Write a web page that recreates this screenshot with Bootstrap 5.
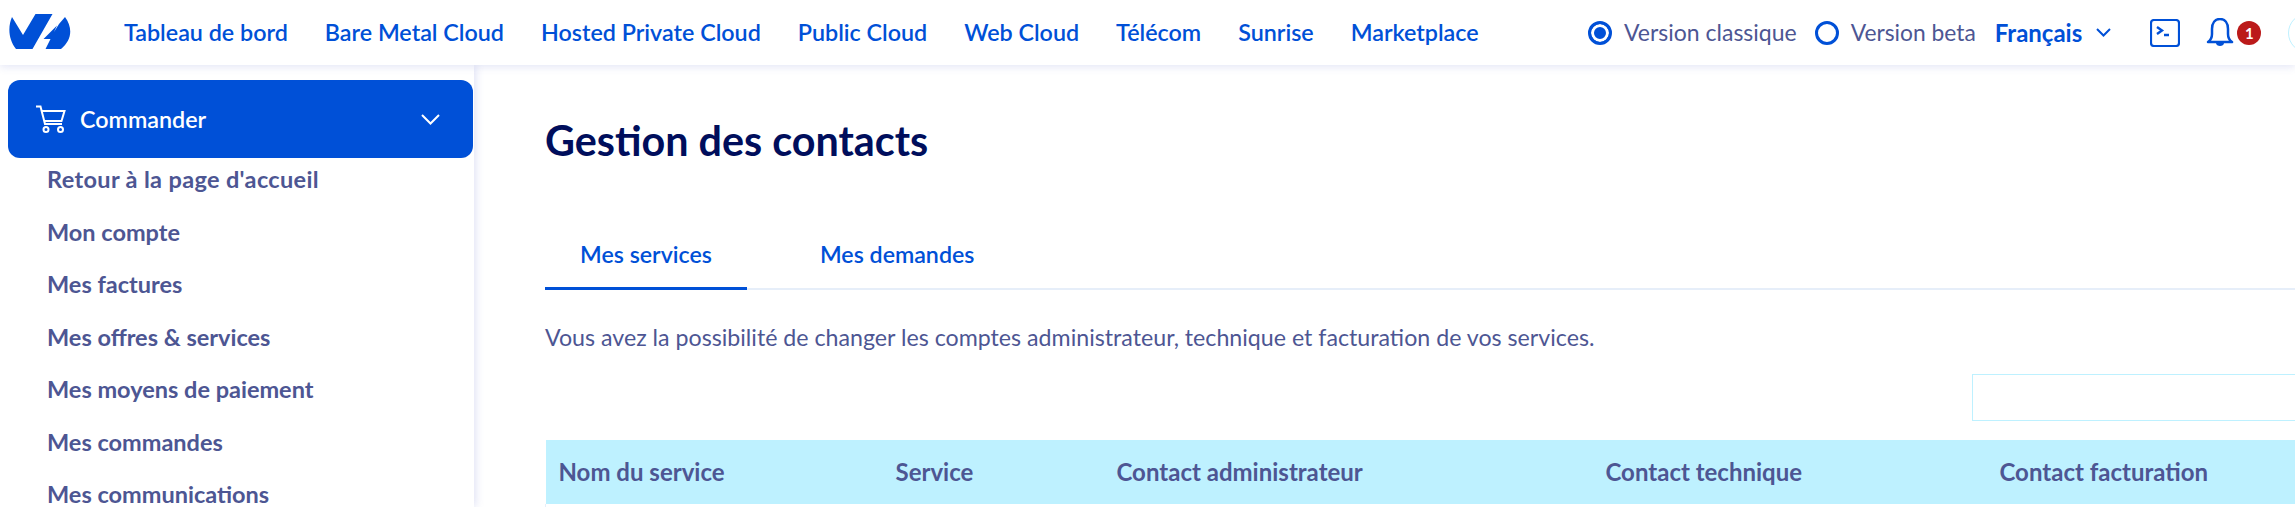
<!doctype html>
<html lang="fr"><head><meta charset="utf-8"><title>Gestion des contacts</title>
<link href="https://cdn.jsdelivr.net/npm/bootstrap@5.3.0/dist/css/bootstrap.min.css" rel="stylesheet">
<style>
html,body{height:507px;overflow:hidden}
body{font-family:"Lato","Liberation Sans",sans-serif;color:#4d5693;background:#fff}
.topbar{height:65px;padding:0;background:#fff;box-shadow:0 2px 8px rgba(90,100,200,.16);position:relative;z-index:2}
.brand-logo{width:116px;flex:none;padding:0}
.logo-svg{margin-left:1px}
.top-nav{gap:37px}
.top-nav .nav-link{padding:0;color:#0050d7;font-size:23.3px;font-weight:600;white-space:nowrap}
.top-right{position:absolute;left:1588px;top:0;width:707px;overflow:hidden;height:65px}
.top-right>*{flex:none}
.ver-radio{width:24px;height:24px;margin:0 12px 0 0;border:3px solid #0050d7;background:#fff;box-shadow:none}
.ver-radio:checked{background:#0050d7;border-color:#0050d7;background-image:none;box-shadow:inset 0 0 0 3px #fff}
.ver-label{font-size:23px;white-space:nowrap;color:#4d5693}
.gap-a{margin-right:18px}.gap-b{margin-right:19px}
.beta{font-size:22.8px}
.lang{font-size:24px;font-weight:700;color:#0050d7;white-space:nowrap}
.chev{margin-left:14px}
.term{margin-left:39px}
.bell{margin-left:26px}
.alert-count{width:24px;height:24px;padding:0;line-height:24px;font-size:15px;background:#bb1a1a;border-radius:50%;color:#fff;font-weight:700;text-align:center;margin-left:3px}
.avatar{width:40px;height:40px;border:1px solid #bef1ff;border-radius:50%;margin-left:27px}
.shell{height:442px}
.side{width:474px;flex:none;padding:15px 1px 0 8px;box-shadow:2px 0 8px rgba(90,100,200,.18);background:#fff;overflow:hidden}
.order-btn{height:78px;width:465px;background:#0050d7;color:#fff;border:0;border-radius:12px;padding:0 33px 0 27px;font-size:23.3px;font-weight:600;text-align:left}
.order-btn:hover{background:#0050d7;color:#fff}
.cart{flex:none;margin-right:14px}
.side-list{padding-left:39px;margin-top:-5px}
.side-list .nav-link{padding:0;height:52.5px;line-height:52.5px;color:#4d5693;font-size:23.5px;font-weight:700;white-space:nowrap}
.side-list .home-link{letter-spacing:.35px}
.work{flex:1;min-width:0;padding:0 0 0 71px;overflow:hidden}
.page-title{font-size:41.3px;font-weight:700;color:#000e5c;margin:50px 0 0;line-height:50px}
.tabs-row{margin-top:63px;border-bottom:2px solid #e6eef9;height:62px}
.tabs-row .nav-link{border:0;border-radius:0;padding:0;height:62px;line-height:53px;margin:0;font-size:23.2px;font-weight:600;color:#0050d7;background:none;text-align:center}
.tabs-row .nav-link.active{color:#0050d7;border-bottom:3px solid #0050d7;width:202px;background:none}
.tabs-row .second{margin-left:73px}
.intro{font-size:23.2px;margin:31px 0 0;line-height:32px;color:#4d5693;white-space:nowrap}
.filter-row{margin-top:21px;height:47px}
.filter-box{margin-left:auto;width:323px;height:47px;border:1px solid #bef1ff;border-right:0;border-radius:0;box-shadow:none;flex:none}
.svc-table{table-layout:fixed;width:1750px;margin:19px 0 0}
.svc-table th{background:#bef1ff;color:#4d5693;height:64px;padding:0 13px;vertical-align:middle;font-size:24px;font-weight:700;border:0;white-space:nowrap;box-shadow:none}
.svc-table td{border:0;border-left:1px solid #e6eef9;height:40px;padding:0}
.c1{width:337px}.c2{width:221px}.c3{width:489px}.c4{width:394px}.c5{width:309px}
</style></head><body>
<nav class="navbar topbar d-flex flex-nowrap justify-content-start align-items-center">
  <a class="navbar-brand brand-logo m-0 ms-2" href="#" aria-label="OVHcloud">
    <svg width="62" height="37" viewBox="0 0 62 37" class="d-block logo-svg"><path fill="#0050d7" d="M3 3 L14 21 L26.500 0 L43.500 0 L23.500 35 L7 35 C-1 25 -1 12 3 3Z M56 3 C64 14 63 26 52 35 L36.500 35 L41.500 25 L34.500 25 L48 11.500 L45 18 L50 10Z"/></svg>
  </a>
  <ul class="nav top-nav flex-nowrap">
    <li class="nav-item"><a class="nav-link" href="#">Tableau de bord</a></li>
    <li class="nav-item"><a class="nav-link" href="#">Bare Metal Cloud</a></li>
    <li class="nav-item"><a class="nav-link" href="#">Hosted Private Cloud</a></li>
    <li class="nav-item"><a class="nav-link" href="#">Public Cloud</a></li>
    <li class="nav-item"><a class="nav-link" href="#">Web Cloud</a></li>
    <li class="nav-item"><a class="nav-link" href="#">Télécom</a></li>
    <li class="nav-item"><a class="nav-link" href="#">Sunrise</a></li>
    <li class="nav-item"><a class="nav-link" href="#">Marketplace</a></li>
  </ul>
  <div class="top-right d-flex align-items-center">
    <input class="form-check-input ver-radio mt-0" type="radio" name="ver" checked aria-label="Version classique">
    <span class="ver-label gap-a">Version classique</span>
    <input class="form-check-input ver-radio mt-0" type="radio" name="ver" aria-label="Version beta">
    <span class="ver-label beta gap-b">Version beta</span>
    <span class="lang">Français</span>
    <svg class="chev" width="15" height="9" viewBox="0 0 15 9"><path d="M1 1l6.500 6.500L14 1" fill="none" stroke="#0050d7" stroke-width="2"/></svg>
    <svg class="term" width="30" height="28" viewBox="0 0 30 28"><rect x="1" y="1" width="28" height="26" rx="3" fill="none" stroke="#0050d7" stroke-width="2.200"/><path d="M7 8l5 3.500L7 15M14 16h5" fill="none" stroke="#0050d7" stroke-width="2.400"/></svg>
    <svg class="bell" width="28" height="29" viewBox="0 0 28 29"><path d="M2 24c3-2 4-4 4-8V11c0-6 3-10 8-10s8 4 8 10v5c0 4 1 6 4 8z" fill="none" stroke="#0050d7" stroke-width="2.500" stroke-linejoin="round"/><path d="M10 25c0 4 8 4 8 0z" fill="#0050d7"/></svg>
    <span class="alert-count">1</span>
    <span class="avatar"></span>
  </div>
</nav>
<div class="shell d-flex">
  <aside class="side">
    <button class="btn order-btn d-flex align-items-center" type="button">
      <svg width="31" height="28" viewBox="0 0 31 28" class="cart"><path d="M1 1.500h4.500L10 19h17M7 6h22.500l-3 10H9.500" fill="none" stroke="#fff" stroke-width="2"/><circle cx="11" cy="24.500" r="2.500" fill="none" stroke="#fff" stroke-width="2"/><circle cx="25.500" cy="24.500" r="2.500" fill="none" stroke="#fff" stroke-width="2"/></svg>
      <span>Commander</span>
      <svg class="ms-auto" width="19" height="11" viewBox="0 0 19 11"><path d="M1 1l8.500 8.500L18 1" fill="none" stroke="#fff" stroke-width="2"/></svg>
    </button>
    <ul class="nav flex-column side-list">
      <li class="nav-item"><a class="nav-link home-link" href="#">Retour à la page d'accueil</a></li>
      <li class="nav-item"><a class="nav-link" href="#">Mon compte</a></li>
      <li class="nav-item"><a class="nav-link" href="#">Mes factures</a></li>
      <li class="nav-item"><a class="nav-link" href="#">Mes offres &amp; services</a></li>
      <li class="nav-item"><a class="nav-link" href="#">Mes moyens de paiement</a></li>
      <li class="nav-item"><a class="nav-link" href="#">Mes commandes</a></li>
      <li class="nav-item"><a class="nav-link" href="#">Mes communications</a></li>
    </ul>
  </aside>
  <main class="work">
    <h1 class="page-title">Gestion des contacts</h1>
    <ul class="nav nav-tabs tabs-row flex-nowrap">
      <li class="nav-item"><a class="nav-link active" href="#">Mes services</a></li>
      <li class="nav-item second"><a class="nav-link" href="#">Mes demandes</a></li>
    </ul>
    <p class="intro">Vous avez la possibilité de changer les comptes administrateur, technique et facturation de vos services.</p>
    <div class="filter-row d-flex"><input class="form-control filter-box" type="text" aria-label="Rechercher"></div>
    <table class="table svc-table">
      <thead><tr><th class="c1">Nom du service</th><th class="c2">Service</th><th class="c3">Contact administrateur</th><th class="c4">Contact technique</th><th class="c5">Contact facturation</th></tr></thead>
      <tbody><tr><td colspan="5"></td></tr></tbody>
    </table>
  </main>
</div>
</body></html>
